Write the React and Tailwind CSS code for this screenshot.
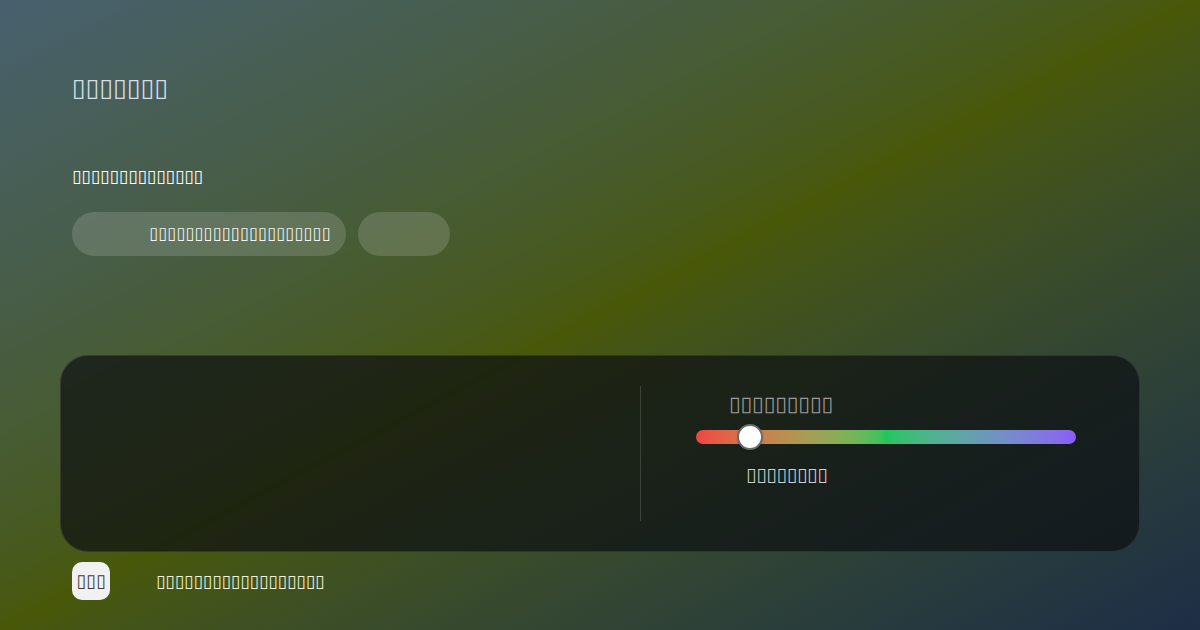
import React, { useState } from "react";

const HueSlider = ({ value }) => {
  return (
    <div className="relative h-[14px] w-[380px] rounded-full bg-gradient-to-r from-[#ef4444] via-[#22c55e] to-[#8b5cf6]">
      <div
        className="absolute top-1/2 h-[26px] w-[26px] -translate-x-1/2 -translate-y-1/2 rounded-full border-2 border-[#6b6b6b] bg-white shadow"
        style={{ left: `${value}%` }}
      />
    </div>
  );
};

export default function App() {
  const [hue] = useState(14.2);

  return (
    <div
      className="min-h-[630px] w-full bg-gradient-to-br from-[#48606e] via-[#485808] to-[#1d2e46] px-[60px] pt-[78px]"
      style={{ fontFamily: '"DejaVu Sans", sans-serif' }}
    >
      <h1 className="px-3 text-[25px] leading-5 text-[#d3dee6]">▯▯▯▯▯▯▯</h1>

      <p className="mt-[68px] px-3 text-[17px] leading-5 text-white">▯▯▯▯▯▯▯▯▯▯▯▯▯▯</p>

      <div className="mt-[26px] flex gap-3 px-3">
        <button className="flex h-11 w-[274px] items-center justify-end rounded-full bg-white/15 pr-[15px] text-[16.5px] leading-5 text-white/95">
          ▯▯▯▯▯▯▯▯▯▯▯▯▯▯▯▯▯▯▯▯
        </button>
        <button className="h-11 w-[92px] rounded-full bg-white/15" />
      </div>

      <div className="mt-[99px] grid h-[197px] grid-cols-[580px_1fr] rounded-[28px] border border-white/10 bg-[#0d0f12]/70 py-[30px]">
        <div className="border-r border-white/15" />
        <div className="flex flex-col pl-[55px]">
          <span className="ml-[33px] mt-[8px] text-[21px] leading-5 text-[#9a9a9a]">▯▯▯▯▯▯▯▯▯</span>
          <div className="mt-[16px]">
            <HueSlider value={hue} />
          </div>
          <span className="ml-[50px] mt-[21px] text-[18.5px] leading-5 text-[#cfcfcf]">▯▯▯▯▯▯▯▯</span>
        </div>
      </div>

      <div className="mt-[10px] flex items-center px-3">
        <div className="flex h-[38px] w-[38px] items-center justify-center rounded-[10px] bg-[#f1f1f1] text-[18px] leading-5 text-[#3a3a3a]">
          ▯▯▯
        </div>
        <span className="ml-[46px] text-[17px] leading-5 text-[#eef3dc]">▯▯▯▯▯▯▯▯▯▯▯▯▯▯▯▯▯▯</span>
      </div>
    </div>
  );
}
